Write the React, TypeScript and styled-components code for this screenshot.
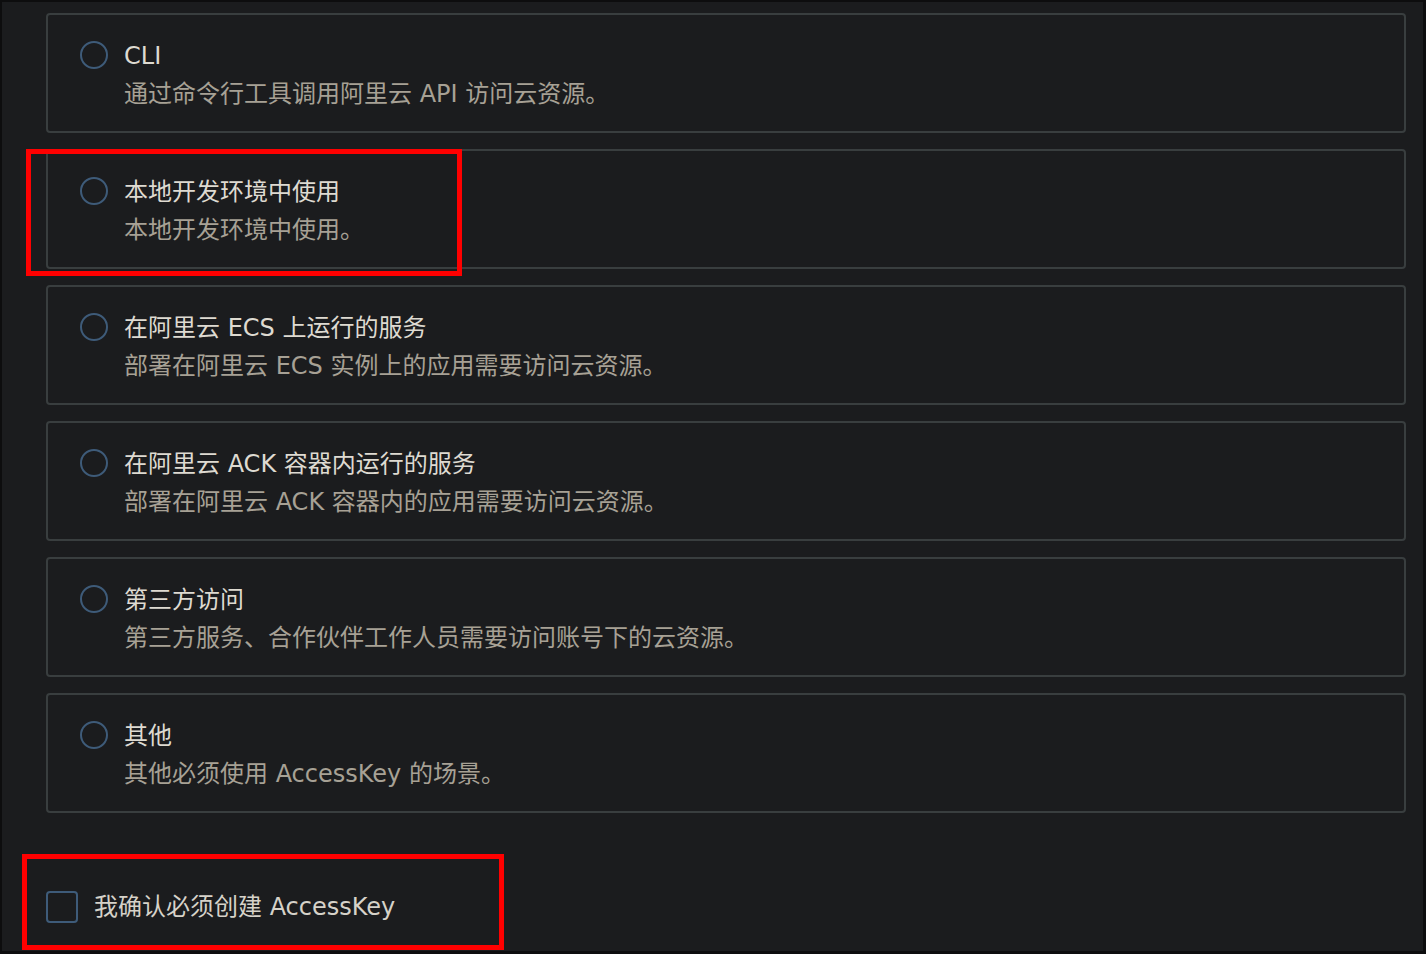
import React from "react";
import styled, { createGlobalStyle } from "styled-components";

const GlobalStyle = createGlobalStyle`
  html, body {
    margin: 0;
    padding: 0;
    background: #0d0d0e;
  }
  body {
    font-family: "DejaVu Sans", "Noto Sans CJK SC", sans-serif;
  }
  * { box-sizing: border-box; }
`;

const Frame = styled.div`
  position: relative;
  width: 1426px;
  height: 954px;
  border-style: solid;
  border-color: #0d0d0e;
  border-width: 2px 3px 3px 2px;
  background: #1b1c1e;
  overflow: hidden;
`;

const Content = styled.div`
  display: flex;
  flex-direction: column;
  padding: 11px 17px 0 44px;
`;

const OptionList = styled.div`
  display: flex;
  flex-direction: column;
  gap: 16px;
`;

const Card = styled.label`
  display: flex;
  align-items: flex-start;
  gap: 16px;
  height: 120px;
  padding: 22px 32px 18px;
  border: 2px solid #393e3f;
  border-radius: 4px;
  background: #1b1c1e;
  cursor: pointer;
`;

const Radio = styled.span`
  flex: none;
  width: 28px;
  height: 28px;
  margin-top: 4px;
  border: 2px solid #3e5b79;
  border-radius: 50%;
`;

const TextBlock = styled.div`
  display: flex;
  flex-direction: column;
`;

const Title = styled.div`
  font-size: 24px;
  line-height: 38px;
  color: #dedad1;
`;

const Desc = styled.div`
  font-size: 24px;
  line-height: 38px;
  color: #a7a195;
`;

const ConfirmRow = styled.label`
  display: flex;
  align-items: center;
  gap: 16px;
  margin-top: 77px;
  height: 34px;
  cursor: pointer;
`;

const CheckBox = styled.span`
  flex: none;
  width: 32px;
  height: 32px;
  border: 2px solid #3e5b79;
  border-radius: 4px;
`;

const ConfirmText = styled.span`
  font-size: 24px;
  line-height: 34px;
  color: #d6d2c9;
`;

const Highlight = styled.div<{ $x: number; $y: number; $w: number; $h: number }>`
  position: absolute;
  left: ${(p) => p.$x}px;
  top: ${(p) => p.$y}px;
  width: ${(p) => p.$w}px;
  height: ${(p) => p.$h}px;
  border: 5px solid #ff0000;
  pointer-events: none;
`;

const options = [
  { title: "CLI", desc: "通过命令行工具调用阿里云 API 访问云资源。" },
  { title: "本地开发环境中使用", desc: "本地开发环境中使用。" },
  { title: "在阿里云 ECS 上运行的服务", desc: "部署在阿里云 ECS 实例上的应用需要访问云资源。" },
  { title: "在阿里云 ACK 容器内运行的服务", desc: "部署在阿里云 ACK 容器内的应用需要访问云资源。" },
  { title: "第三方访问", desc: "第三方服务、合作伙伴工作人员需要访问账号下的云资源。" },
  { title: "其他", desc: "其他必须使用 AccessKey 的场景。" },
];

export default function App() {
  return (
    <>
      <GlobalStyle />
      <Frame>
        <Content>
          <OptionList>
            {options.map((o) => (
              <Card key={o.title}>
                <Radio />
                <TextBlock>
                  <Title>{o.title}</Title>
                  <Desc>{o.desc}</Desc>
                </TextBlock>
              </Card>
            ))}
          </OptionList>
          <ConfirmRow>
            <CheckBox />
            <ConfirmText>我确认必须创建 AccessKey</ConfirmText>
          </ConfirmRow>
        </Content>
        <Highlight $x={24} $y={147} $w={436} $h={127} />
        <Highlight $x={20} $y={852} $w={482} $h={96} />
      </Frame>
    </>
  );
}
